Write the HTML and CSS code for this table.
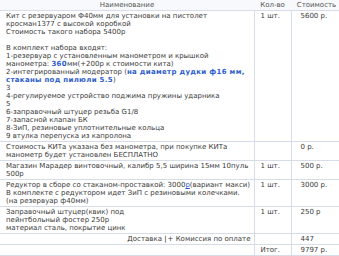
FILE: index.html
```html
<!DOCTYPE html>
<html>
<head>
<meta charset="utf-8">
<link rel="stylesheet" href="styles.css">
</head>
<body>
<table class="order">
  <colgroup>
    <col class="c-name">
    <col class="c-qty">
    <col class="c-price">
  </colgroup>
  <thead>
    <tr>
      <th class="h-name">Наименование</th>
      <th>Кол-во</th>
      <th>Стоимость</th>
    </tr>
  </thead>
  <tbody>
    <tr>
      <td>Кит с резервуаром Ф40мм для установки на пистолет<br>кросман1377 с высокой коробкой<br>Стоимость такого набора 5400р<br><br>В комплект набора входят:<br>1-резервуар с установленным манометром и крышкой<br>манометра: <b class="hl">360</b>мм(+200р к стоимости кита)<br>2-интегрированный модератор (<b class="hl">на диаметр дудки ф16 мм,<br>стаканы под пилюли 5.5</b>)<br>3<br>4-регулируемое устройство поджима пружины ударника<br>5<br>6-заправочный штуцер резьба G1/8<br>7-запасной клапан БК<br>8-ЗиП, резиновые уплотнительные кольца<br>9 втулка перепуска из капролона</td>
      <td class="qty">1 шт.</td>
      <td class="price">5600 р.</td>
    </tr>
    <tr>
      <td>Стоимость КИТа указана без манометра, при покупке КИТа<br>манометр будет установлен БЕСПЛАТНО</td>
      <td class="qty"></td>
      <td class="price">0 р.</td>
    </tr>
    <tr>
      <td>Магазин Марадер винтовочный, калибр 5,5 ширина 15мм 10пуль<br>500р</td>
      <td class="qty">1 шт.</td>
      <td class="price">500 р.</td>
    </tr>
    <tr>
      <td>Редуктор в сборе со стаканом-проставкой: 3000<span class="ul">р</span>(вариант макси)<br>В комплекте с редуктором идет ЗиП с резиновыми колечками.<br>(на резервуар ф40мм)</td>
      <td class="qty">1 шт.</td>
      <td class="price">3000 р.</td>
    </tr>
    <tr>
      <td>Заправочный штуцер(квик) под<br>пейнтбольный фостер 250р<br>материал сталь, покрытие цинк</td>
      <td class="qty">1 шт.</td>
      <td class="price">250 р</td>
    </tr>
    <tr>
      <td class="delivery">Доставка <span class="bar">|</span>+ Комиссия по оплате</td>
      <td class="qty"></td>
      <td class="price">447</td>
    </tr>
    <tr>
      <td></td>
      <td class="qty">Итог.</td>
      <td class="price">9797 р.</td>
    </tr>
  </tbody>
</table>
</body>
</html>
```
FILE: styles.css
```css
html, body {
  margin: 0;
  padding: 0;
  background: #ffffff;
}

.order {
  border-collapse: collapse;
  width: 342px;
  table-layout: fixed;
  font-family: "DejaVu Sans", Verdana, sans-serif;
  font-size: 7px;
  line-height: 8px;
  color: #3a3a3a;
}

.c-name { width: 254px; }
.c-qty { width: 37px; }
.c-price { width: 51px; }

.order th {
  font-weight: normal;
  color: #555;
  text-align: center;
  padding: 1px 3px 1px;
  border-bottom: 1px solid #d6dde8;
  background: #f7f9fc;
  white-space: nowrap;
}

.order td {
  vertical-align: top;
  padding: 1px 4px 1px 6px;
  border-top: 1px solid #d6dde8;
  border-bottom: 1px solid #d6dde8;
  white-space: nowrap;
}

.order td.qty,
.order td.price {
  border-left: 1px solid #d6dde8;
}

.order td.qty {
  padding-left: 6px;
}

.order td.price {
  padding-left: 9px;
}

.hl {
  color: #2c5ccc;
  letter-spacing: 0.3px;
}

.ul {
  color: #2c5ccc;
  text-decoration: underline;
}

.order td.delivery {
  text-align: right;
  padding-right: 3px;
}

.bar {
  color: #222;
  margin-right: 1px;
}
```
